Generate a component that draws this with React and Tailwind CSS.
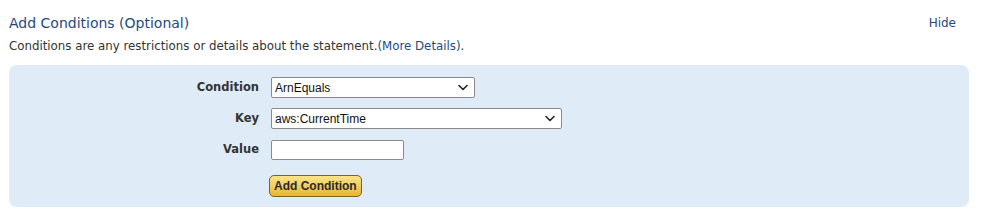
import React from "react";

function Chevron() {
  return (
    <svg width="10" height="7" viewBox="0 0 10 7" className="shrink-0">
      <path d="M1 1.5 L5 5.5 L9 1.5" fill="none" stroke="#222" strokeWidth="1.6" strokeLinecap="round" strokeLinejoin="round" />
    </svg>
  );
}

function FakeSelect({ value, width }) {
  return (
    <div
      className={`flex h-[21px] ${width} items-center justify-between rounded-[2px] border border-[#8a8a8a] bg-white pl-[3px] pr-[6px] text-[12px] text-[#111]`}
      style={{ fontFamily: '"Liberation Sans", Arial, sans-serif' }}
    >
      <span>{value}</span>
      <Chevron />
    </div>
  );
}

function Row({ label, children }) {
  return (
    <div className="flex items-center">
      <div className="w-[250px] text-right text-[11.5px] font-bold text-[#333]">{label}</div>
      <div className="ml-[12px]">{children}</div>
    </div>
  );
}

export default function App() {
  return (
    <div className="h-[220px] w-[986px] bg-white" style={{ fontFamily: '"DejaVu Sans", Verdana, sans-serif' }}>
      <div className="flex items-start justify-between pl-[9px] pr-[30px] pt-[14px]">
        <h2 className="text-[14px] leading-[18px] text-[#1f4a7f]">Add Conditions (Optional)</h2>
        <a className="text-[12px] leading-[18px] text-[#1f4a7f]">Hide</a>
      </div>
      <p className="mt-[6px] pl-[9px] text-[11.8px] leading-[16px] text-[#333]">
        Conditions are any restrictions or details about the statement.
        <a className="text-[#1f4a7f]">(More Details)</a>.
      </p>
      <div className="ml-[9px] mt-[11px] flex h-[142px] w-[960px] flex-col rounded-[8px] bg-[#dfebf6] pt-[12px]">
        <Row label="Condition">
          <FakeSelect value="ArnEquals" width="w-[204px]" />
        </Row>
        <div className="mt-[10px]">
          <Row label="Key">
            <FakeSelect value="aws:CurrentTime" width="w-[291px]" />
          </Row>
        </div>
        <div className="mt-[11px]">
          <Row label="Value">
            <div className="h-[20px] w-[133px] rounded-[2px] border border-[#8a8a8a] bg-white" />
          </Row>
        </div>
        <div className="ml-[260px] mt-[13px]">
          <button
            className="h-[22px] rounded-[5px] border border-[#7a6420] bg-gradient-to-b from-[#fbe489] to-[#e7b628] px-[4px] text-[12px] font-bold text-[#2a2a2a]"
            style={{ fontFamily: '"Liberation Sans", Arial, sans-serif' }}
          >
            Add Condition
          </button>
        </div>
      </div>
    </div>
  );
}
